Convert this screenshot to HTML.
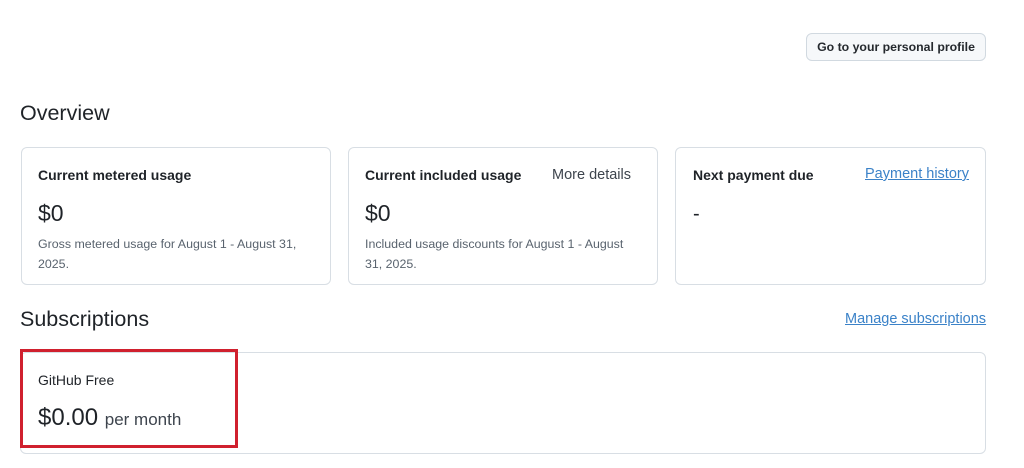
<!DOCTYPE html>
<html><head><meta charset="utf-8"><style>
*{margin:0;padding:0;box-sizing:border-box}
body{width:1024px;height:468px;background:#fff;font-family:"Liberation Sans",sans-serif;color:#1f2328;position:relative;overflow:hidden}
.a{position:absolute;white-space:nowrap}
.card{position:absolute;border:1px solid #d8dee4;border-radius:6px;background:#fff}
.btn{position:absolute;left:806px;top:33px;width:180px;height:28px;border:1px solid #d1d9e0;border-radius:6px;background:#f6f8fa;font-size:12.3px;font-weight:bold;text-align:center;line-height:26px;color:#25292e}
h2{position:absolute;font-size:21.5px;font-weight:normal;color:#1f2328}
.t{font-size:14px;font-weight:bold;color:#1f2328}
.big{font-size:23px;color:#1f2328}
.sm{font-size:12.4px;color:#59636e;line-height:20px;white-space:normal}
.lnk{color:#3b82c8;text-decoration:underline;font-size:14.5px}
</style></head><body>
<div class="btn">Go to your personal profile</div>
<h2 style="left:20px;top:101px">Overview</h2>
<div class="card" style="left:21px;top:147px;width:310px;height:138px"></div>
<div class="card" style="left:348px;top:147px;width:310px;height:138px"></div>
<div class="card" style="left:675px;top:147px;width:311px;height:138px"></div>
<div class="a t" style="left:38px;top:167px">Current metered usage</div>
<div class="a big" style="left:38px;top:200px">$0</div>
<div class="a sm" style="left:38px;top:234px;width:275px">Gross metered usage for August 1 - August 31, 2025.</div>
<div class="a t" style="left:365px;top:167px">Current included usage</div>
<div class="a" style="left:552px;top:167px;font-size:14.5px;color:#3d444d">More details</div>
<div class="a big" style="left:365px;top:200px">$0</div>
<div class="a sm" style="left:365px;top:234px;width:270px">Included usage discounts for August 1 - August 31, 2025.</div>
<div class="a t" style="left:693px;top:167px">Next payment due</div>
<div class="a lnk" style="left:865px;top:166px">Payment history</div>
<div class="a" style="left:693px;top:203px;font-size:20px">-</div>
<h2 style="left:20px;top:307px">Subscriptions</h2>
<div class="a lnk" style="left:845px;top:311px">Manage subscriptions</div>
<div class="card" style="left:20px;top:352px;width:966px;height:102px"></div>
<div class="a" style="left:20px;top:349px;width:218px;height:99px;border:3px solid #d0202e"></div>
<div class="a" style="left:38px;top:372px;font-size:14px;color:#1f2328">GitHub Free</div>
<div class="a" style="left:38px;top:404px;font-size:24px">$0.00 <span style="font-size:17px;color:#3d444d">per month</span></div>
</body></html>
